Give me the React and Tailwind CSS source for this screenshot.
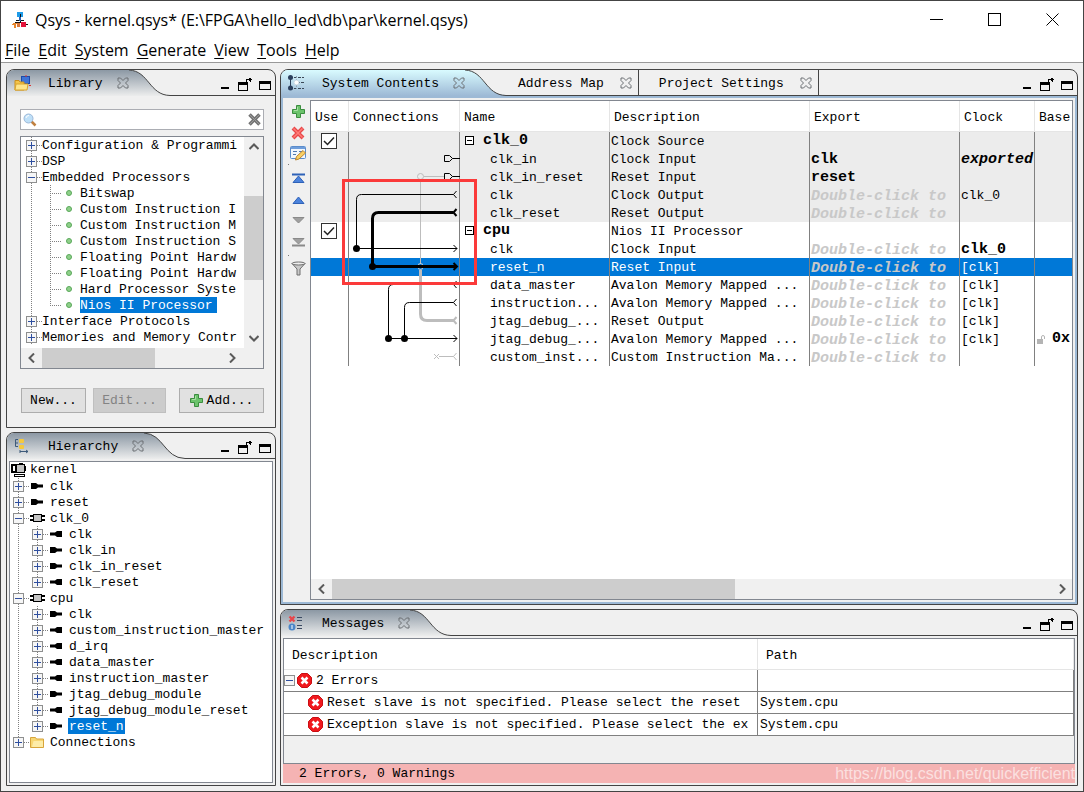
import { useState } from "react";

const MENUS = ["File", "Edit", "System", "Generate", "View", "Tools", "Help"];

const LIBRARY = [
  { label: "Configuration & Programmi", kind: "plus" },
  { label: "DSP", kind: "plus" },
  { label: "Embedded Processors", kind: "minus" },
  { label: "Bitswap", kind: "leaf" },
  { label: "Custom Instruction I", kind: "leaf" },
  { label: "Custom Instruction M", kind: "leaf" },
  { label: "Custom Instruction S", kind: "leaf" },
  { label: "Floating Point Hardw", kind: "leaf" },
  { label: "Floating Point Hardw", kind: "leaf" },
  { label: "Hard Processor Syste", kind: "leaf" },
  { label: "Nios II Processor", kind: "leaf", last: true },
  { label: "Interface Protocols", kind: "plus" },
  { label: "Memories and Memory Contr", kind: "plus" },
];

const HIERARCHY = [
  { label: "clk", level: 1, icon: "in" },
  { label: "reset", level: 1, icon: "in" },
  { label: "clk_0", level: 1, icon: "chip", open: true },
  { label: "clk", level: 2, icon: "out" },
  { label: "clk_in", level: 2, icon: "in" },
  { label: "clk_in_reset", level: 2, icon: "in" },
  { label: "clk_reset", level: 2, icon: "out", last: true },
  { label: "cpu", level: 1, icon: "chip", open: true },
  { label: "clk", level: 2, icon: "in" },
  { label: "custom_instruction_master", level: 2, icon: "out" },
  { label: "d_irq", level: 2, icon: "out" },
  { label: "data_master", level: 2, icon: "out" },
  { label: "instruction_master", level: 2, icon: "out" },
  { label: "jtag_debug_module", level: 2, icon: "in" },
  { label: "jtag_debug_module_reset", level: 2, icon: "out" },
  { label: "reset_n", level: 2, icon: "in", last: true },
  { label: "Connections", level: 1, icon: "folder", last: true },
];

const HINT = "Double-click to";

const ROWS = [
  { name: "clk_0", module: true, desc: "Clock Source", shade: true },
  { name: "clk_in", desc: "Clock Input", exported: "clk", clock: "exported", clockStyle: "font-bold italic text-[15px]", shade: true },
  { name: "clk_in_reset", desc: "Reset Input", exported: "reset", shade: true },
  { name: "clk", desc: "Clock Output", hint: true, clock: "clk_0", shade: true },
  { name: "clk_reset", desc: "Reset Output", hint: true, shade: true },
  { name: "cpu", module: true, desc: "Nios II Processor" },
  { name: "clk", desc: "Clock Input", hint: true, clock: "clk_0", clockStyle: "font-bold text-[15px]" },
  { name: "reset_n", desc: "Reset Input", hint: true, clock: "[clk]", selected: true },
  { name: "data_master", desc: "Avalon Memory Mapped ...", hint: true, clock: "[clk]" },
  { name: "instruction...", desc: "Avalon Memory Mapped ...", hint: true, clock: "[clk]" },
  { name: "jtag_debug_...", desc: "Reset Output", hint: true, clock: "[clk]" },
  { name: "jtag_debug_...", desc: "Avalon Memory Mapped ...", hint: true, clock: "[clk]", base: "0x" },
  { name: "custom_inst...", desc: "Custom Instruction Ma...", hint: true },
];

const ERRORS = [
  "Reset slave is not specified. Please select the reset",
  "Exception slave is not specified. Please select the ex",
];

/* ---------- icons ---------- */

function QsysIcon() {
  return (
    <svg width="16" height="16" viewBox="0 0 16 16" shapeRendering="crispEdges">
      <rect x="5" y="0" width="6" height="5" fill="#1e9be8" />
      <path d="M8 2v8M3 10h10M4 8h8" stroke="#111" fill="none" />
      <path d="M7 5h2v4h-2z" fill="#2b63b8" />
      <path d="M0 12h1v-1h1v4h1v-4h2v4" stroke="#e8862c" fill="none" />
      <rect x="5" y="11" width="3" height="4" fill="#d9763a" />
      <rect x="9" y="10" width="5" height="5" fill="#e3123a" />
      <path d="M14 12.500h2" stroke="#111" />
    </svg>
  );
}

function LibraryIcon() {
  return (
    <svg width="17" height="16" viewBox="0 0 17 16">
      <rect x="7.500" y="1.500" width="8" height="7" fill="#3f74d6" stroke="#1d4ba8" />
      <path d="M15 10.500h2M12 0v2" stroke="#d33" />
      <path d="M1 15V5.500h4l1 1.500h4v8z" fill="#f3c44a" stroke="#c98f1d" />
      <path d="M1 15l1-6h12l-1 6z" fill="#fde58c" stroke="#d9a42d" />
    </svg>
  );
}

function HierarchyIcon() {
  return (
    <svg width="16" height="16" viewBox="0 0 16 16">
      <path d="M4 1.500H1.500v7H4M2 5h2" stroke="#3d5a7a" fill="none" />
      <rect x="5" y="1" width="5" height="4" rx="1" fill="#f5c93e" />
      <rect x="5" y="7" width="5" height="4" rx="1" fill="#f5c93e" />
      <path d="M6 13.500h8M6 12v3M12 12l2 1.500-2 1.500" stroke="#3d5a7a" fill="none" />
    </svg>
  );
}

function ContentsIcon() {
  return (
    <svg width="17" height="16" viewBox="0 0 17 16">
      <path d="M2 2.500h14M2 13.500h14M9 7.500h7" stroke="#3a4756" fill="none" strokeDasharray="3 1" />
      <path d="M8.500 1v13" stroke="#8fa3b5" strokeDasharray="2 1" />
      <path d="M2.500 2v11" stroke="#2a3b55" />
      <circle cx="2.500" cy="2.500" r="2.500" fill="#2b3f5c" />
      <circle cx="2.500" cy="13" r="2.500" fill="#2b3f5c" />
      <circle cx="8.500" cy="7.500" r="2.500" fill="#fff" stroke="#c9d8e4" />
    </svg>
  );
}

function MessagesIcon() {
  return (
    <svg width="16" height="16" viewBox="0 0 16 16">
      <path d="M1.500 1.500l5 5M6.500 1.500l-5 5" stroke="#e8474c" strokeWidth="2.400" />
      <circle cx="4" cy="12" r="3.500" fill="#4b86c8" />
      <path d="M4 10v4" stroke="#fff" />
      <path d="M9 2.500h5M9 5.500h5M9 10.500h5M9 13.500h5" stroke="#3a4a63" />
    </svg>
  );
}

function CloseGlyph() {
  return (
    <svg width="12" height="12" viewBox="0 0 12 12" fill="none" stroke="#6b6f73">
      <path d="M1 1h2.500L6 3.500 8.500 1H11v2.500L8.500 6 11 8.500V11H8.500L6 8.500 3.500 11H1V8.500L3.500 6 1 3.500z" />
    </svg>
  );
}

function SearchIcon() {
  return (
    <svg width="14" height="14" viewBox="0 0 14 14">
      <path d="M8.500 8.500L12.500 12.500" stroke="#c08040" strokeWidth="2.500" />
      <circle cx="5.500" cy="5.500" r="4.500" fill="#bfe0f8" stroke="#9cb8d8" />
      <path d="M3 5a3 3 0 0 1 3-2.500" stroke="#fff" fill="none" />
    </svg>
  );
}

function ClearIcon() {
  return (
    <svg width="13" height="13" viewBox="0 0 13 13">
      <path d="M1.500 1.500l10 10M11.500 1.500l-10 10" stroke="#747474" strokeWidth="3.500" />
      <path d="M2 2l9 9M11 2l-9 9" stroke="#9a9a9a" strokeWidth="1" />
    </svg>
  );
}

function PlusIcon() {
  return (
    <svg width="13" height="13" viewBox="0 0 13 13">
      <path d="M4.500 .5h4v4h4v4h-4v4h-4v-4h-4v-4h4z" fill="#6cc36c" stroke="#3b8d3f" />
      <path d="M5.500 2v3.500H2" stroke="#a9e0a4" fill="none" />
    </svg>
  );
}

function RemoveIcon() {
  return (
    <svg width="14" height="14" viewBox="0 0 14 14">
      <path d="M2 2l10 10M12 2L2 12" stroke="#e8484a" strokeWidth="4" />
      <path d="M2.500 2.500l9 9M11.500 2.500l-9 9" stroke="#ff7c78" strokeWidth="1.500" />
    </svg>
  );
}

function EditIcon() {
  return (
    <svg width="17" height="15" viewBox="0 0 17 15">
      <rect x=".5" y=".5" width="15" height="12" rx="1" fill="#f2f7fd" stroke="#5b8ccb" />
      <path d="M1 2h14" stroke="#6f9edb" strokeWidth="2" />
      <path d="M3 5.500h4M3 8.500h3M9 5.500h4" stroke="#5078b0" />
      <path d="M5.500 14l1-3.500 6.500-6 2.500 2.500-6.500 6z" fill="#f9cf63" stroke="#b98332" />
    </svg>
  );
}

function ArrowIcon({ up, bar, gray }) {
  const fill = gray ? "#a0a0a0" : "#4b83dc";
  const edge = gray ? "#8a8a8a" : "#2f62b8";
  return (
    <svg width="13" height="11" viewBox="0 0 13 11">
      {up ? (
        <path d="M1 9.500L6.500 3l5.500 6.500z" fill={fill} stroke={edge} />
      ) : (
        <path d="M1 2.500h11L6.500 8z" fill={fill} stroke={edge} />
      )}
      {bar && <path d={up ? "M0 1.500h13" : "M0 9.500h13"} stroke={edge} strokeWidth="2" />}
    </svg>
  );
}

function FilterIcon() {
  return (
    <svg width="15" height="15" viewBox="0 0 15 15">
      <path d="M1 2.500l5 5.500v6h3V8l5-5.500z" fill="#c9c9c9" stroke="#6e6e6e" />
      <ellipse cx="7.500" cy="2.500" rx="6.500" ry="1.500" fill="#eee" stroke="#6e6e6e" />
    </svg>
  );
}

function ErrorIcon() {
  return (
    <svg width="15" height="15" viewBox="0 0 15 15">
      <path d="M4.500 .5h6l4 4v6l-4 4h-6l-4-4v-6z" fill="#f0191d" stroke="#c90f14" />
      <path d="M4.500 4.500l6 6M10.500 4.500l-6 6" stroke="#fff" strokeWidth="2.500" />
    </svg>
  );
}

function LockIcon() {
  return (
    <svg width="9" height="9" viewBox="0 0 9 9">
      <rect x="0" y="4" width="6" height="5" fill="#b4b4b4" />
      <path d="M4.500 4V2a1.500 1.500 0 0 1 3 0v2" stroke="#b4b4b4" fill="none" />
    </svg>
  );
}

function NodeIcon({ type }) {
  if (type === "chip") {
    return (
      <svg width="15" height="10" viewBox="0 0 15 10" shapeRendering="crispEdges">
        <path d="M0 3h15M0 7h15" stroke="#000" strokeWidth="2" />
        <rect x="3.500" y="1.500" width="8" height="7" fill="#c4c4c4" stroke="#000" />
      </svg>
    );
  }
  if (type === "folder") {
    return (
      <svg width="14" height="12" viewBox="0 0 14 12">
        <path d="M.5 11.500V1.500h5l1 1.500h7v8.500z" fill="#f7d774" stroke="#d8a53a" />
        <path d="M2 11l1.500-6H13v6z" fill="#fdeca8" />
      </svg>
    );
  }
  const d = type === "in" ? "M1 1h5l2 1.500h5v3H8L6 7H1z" : "M13 1H8L6 2.500H1v3h5L8 7h5z";
  return (
    <svg width="14" height="8" viewBox="0 0 14 8">
      <path d={d} fill="#000" />
    </svg>
  );
}

function KernelIcon() {
  return (
    <svg width="15" height="14" viewBox="0 0 15 14" shapeRendering="crispEdges">
      <rect x="1" y="2" width="4" height="7" fill="#fff" stroke="#000" strokeWidth="2" />
      <rect x="5.500" y="1.500" width="8" height="8" fill="#c4c4c4" stroke="#000" />
      <path d="M8 .5h4M14 3v5" stroke="#000" />
      <rect x="3" y="11" width="10" height="2" fill="#fff" stroke="#000" />
    </svg>
  );
}

function Chevron({ d }) {
  return (
    <svg width="10" height="10" viewBox="0 0 10 10" fill="none" stroke="#5a5a5a" strokeWidth="2">
      <path d={d} />
    </svg>
  );
}

const CHEVRONS = {
  left: "M7 0.500L2.500 5 7 9.500",
  right: "M3 0.500L7.500 5 3 9.500",
  up: "M0.500 7L5 2.500 9.500 7",
  down: "M0.500 3L5 7.500 9.500 3",
};

// one 19x16 cell of dotted guide lines, with an optional +/- box
function Guide({ box, down = true, up = true, across = true }) {
  return (
    <svg className="shrink-0" width="19" height="16" viewBox="0 0 19 16" fill="none">
      <g stroke="#808080" strokeDasharray="1 1">
        {up && <path d="M8.500 0v8" />}
        {down && <path d="M8.500 8v8" />}
        {across && <path d="M8 8.500h11" />}
      </g>
      {box && (
        <g>
          <rect x="3.500" y="3.500" width="10" height="10" fill="#f6f6f6" stroke="#8e8f8f" />
          <path d={box === "plus" ? "M5 8.500h7M8.500 5v7" : "M5 8.500h7"} stroke="#2f4f9f" />
        </g>
      )}
    </svg>
  );
}

/* ---------- panels ---------- */

function PanelButtons() {
  return (
    <div className="flex items-end gap-1.5 pb-1 pr-[3px]">
      <button aria-label="Minimize">
        <svg width="14" height="14" viewBox="0 0 14 14" shapeRendering="crispEdges">
          <path d="M3 11h8" stroke="#000" strokeWidth="2" />
        </svg>
      </button>
      <button aria-label="Detach">
        <svg width="14" height="14" viewBox="0 0 14 14" shapeRendering="crispEdges">
          <path d="M.5 5v8.500h9V5" stroke="#000" fill="none" />
          <path d="M0 6.500h10" stroke="#000" strokeWidth="3" />
          <path d="M8.500 5V2.500H14M12 .5v4M11.500 1v3" stroke="#000" fill="none" />
        </svg>
      </button>
      <button aria-label="Maximize">
        <svg width="14" height="14" viewBox="0 0 14 14" shapeRendering="crispEdges">
          <rect x="1.500" y="4.500" width="11" height="8" stroke="#000" fill="none" />
          <path d="M1 5.500h12" stroke="#000" strokeWidth="3" />
        </svg>
      </button>
    </div>
  );
}

function TabCurve({ active }) {
  const id = active ? "curve-active" : "curve-idle";
  return (
    <svg className="shrink-0" width="41" height="26" viewBox="0 0 41 26">
      <defs>
        <linearGradient id={id} x1="0" y1="0" x2="0" y2="1">
          <stop offset="0" stopColor={active ? "#d9fbff" : "#8c98a4"} />
          <stop offset="1" stopColor={active ? "#9db9d5" : "#eceded"} />
        </linearGradient>
      </defs>
      <path d="M0 0C20 1 20 25 41 25V26H0z" fill={`url(#${id})`} />
      <path d="M0 0C20 1 20 25 41 25.500" fill="none" stroke="#444" />
    </svg>
  );
}

function Panel({ title, icon, active, tabs, className, children }) {
  return (
    <section className={`flex flex-col overflow-hidden rounded-t-lg border border-[#444] bg-[#f0f0f0] ${className || ""}`}>
      <header className="flex h-[26px] shrink-0">
        <div
          className={`flex items-center pl-[7px] ${
            active ? "bg-linear-to-b from-[#d9fbff] to-[#9db9d5]" : "bg-linear-to-b from-[#8c98a4] to-[#eceded]"
          }`}
        >
          <span className="flex w-[34px]">{icon}</span>
          <h2 className="pt-0.5 whitespace-pre">{title}</h2>
          <button className="ml-[14px]" aria-label={`Close ${title}`}>
            <CloseGlyph />
          </button>
        </div>
        <TabCurve active={active} />
        <div className="flex flex-1 border-b border-[#444]">
          {tabs}
          <div className="ml-auto flex">
            <PanelButtons />
          </div>
        </div>
      </header>
      {children}
    </section>
  );
}

function IdleTab({ title, className }) {
  return (
    <div className={`flex items-center border-r border-[#444] ${className}`}>
      <button className="pt-0.5 whitespace-pre">{title}</button>
      <button className="ml-4" aria-label={`Close ${title}`}>
        <CloseGlyph />
      </button>
    </div>
  );
}

function HScroll({ thumb, className }) {
  return (
    <div className={`flex h-5 shrink-0 items-stretch bg-[#f0f0f0] ${className || ""}`}>
      <button className="flex w-[21px] items-center justify-center" aria-label="Scroll left">
        <Chevron d={CHEVRONS.left} />
      </button>
      <div className="flex-1">
        <div className={`h-full bg-[#cdcdcd] ${thumb}`} />
      </div>
      <button className="flex w-[21px] items-center justify-center" aria-label="Scroll right">
        <Chevron d={CHEVRONS.right} />
      </button>
    </div>
  );
}

function LibraryPanel() {
  const [query, setQuery] = useState("");
  const [selected, setSelected] = useState(10);

  return (
    <Panel title="Library" icon={<LibraryIcon />}>
      <div className="flex flex-col pt-[13px] pr-[11px] pb-[14px] pl-[13px]">
        <div className="mb-1.5 flex h-[21px] items-center border border-[#abadb3] bg-white px-0.5">
          <SearchIcon />
          <input
            type="text"
            aria-label="Search library"
            value={query}
            onChange={(e) => setQuery(e.target.value)}
            className="min-w-0 flex-1 px-1 outline-none"
          />
          <button aria-label="Clear search" onClick={() => setQuery("")}>
            <ClearIcon />
          </button>
        </div>
        <div className="border border-[#828790] bg-white">
          <div className="flex">
            <ul className="min-w-0 flex-1 overflow-hidden pb-[3px] pl-0.5">
              {LIBRARY.map((item, i) => (
                <li key={i} className="flex h-4 leading-[18px] whitespace-pre" onClick={() => setSelected(i)}>
                  {item.kind === "leaf" ? (
                    <>
                      <Guide across={false} />
                      <Guide down={!item.last} />
                      <span className="flex w-[19px] shrink-0 items-center justify-center pr-1">
                        <span className="size-1.5 rounded-full border border-[#5aa85a] bg-[#8fd08a]" />
                      </span>
                    </>
                  ) : (
                    <Guide box={item.kind} />
                  )}
                  <span className={i === selected ? "bg-[#0078d7] pr-1 text-white" : ""}>{item.label}</span>
                </li>
              ))}
            </ul>
            <div className="flex w-[19px] flex-col bg-[#f0f0f0]">
              <button className="flex h-5 items-center justify-center" aria-label="Scroll up">
                <Chevron d={CHEVRONS.up} />
              </button>
              <div className="flex flex-1 flex-col">
                <div className="basis-[23%]" />
                <div className="basis-[49%] bg-[#cdcdcd]" />
              </div>
              <button className="flex h-5 items-center justify-center" aria-label="Scroll down">
                <Chevron d={CHEVRONS.down} />
              </button>
            </div>
          </div>
          <HScroll thumb="w-[63%]" className="pr-[21px]" />
        </div>
        <div className="mt-[19px] flex h-[25px] pl-px">
          <button className="w-[65px] border border-[#adadad] bg-[#e1e1e1]">New...</button>
          <button className="ml-[7px] w-[73px] border border-[#bfbfbf] bg-[#cccccc] text-[#838383]" disabled>
            Edit...
          </button>
          <button className="ml-auto flex w-[85px] items-center justify-center gap-1 border border-[#adadad] bg-[#e1e1e1]">
            <PlusIcon />
            Add...
          </button>
        </div>
      </div>
    </Panel>
  );
}

function HierarchyPanel() {
  const [selected, setSelected] = useState(15);

  return (
    <Panel title="Hierarchy" icon={<HierarchyIcon />} className="min-h-0 flex-1">
      <div className="flex min-h-0 flex-1 p-0.5">
        <ul className="flex-1 overflow-hidden border border-[#828790] bg-white">
          <li className="flex h-4 items-center gap-1 pl-px leading-[18px]">
            <KernelIcon />
            kernel
          </li>
          {HIERARCHY.map((node, i) => (
            <li key={i} className="flex h-4 leading-[18px] whitespace-pre" onClick={() => setSelected(i)}>
              {node.level === 2 && <Guide across={false} />}
              <Guide box={node.open ? "minus" : "plus"} down={!node.last} />
              <span className="flex w-5 shrink-0 items-center pl-px">
                <NodeIcon type={node.icon} />
              </span>
              <span className={i === selected ? "bg-[#0078d7] px-px text-white" : "px-px"}>{node.label}</span>
            </li>
          ))}
        </ul>
      </div>
    </Panel>
  );
}

// wires between the module ports, drawn over the Connections column
function Wires() {
  const fork = (y) => `M107.500 ${y - 3.5}L104.500 ${y}l3 3.500`;
  const arrow = (y) => `M104.500 ${y - 3.5}L108 ${y}l-3.500 3.500`;
  return (
    <svg
      className="pointer-events-none absolute -top-0.5 -left-[9px] max-w-none"
      width="140"
      height="240"
      viewBox="-9 -2 140 240"
      fill="none"
    >
      <g stroke="#bdbdbd">
        <path d="M71.500 48v84M75 44.500h20" />
        <circle cx="71.500" cy="44.500" r="3" fill="#ececec" />
        <path d="M71.500 138v44q0 6.500 6.500 6.500h27" strokeWidth="3" />
        <path d={fork(188.5)} strokeWidth="2" />
        <path d={`M85 222l5 5M90 222l-5 5M90 224.500h14.500${fork(224.5)}`} />
      </g>
      <g stroke="#000">
        <path d="M95.500 23.500h5l3 3-3 3h-5zM103.500 26.500h7.500" />
        <path d="M95.500 41.500h5l3 3-3 3h-5zM103.500 44.500h7.500" />
        <path d={`M104.500 62.500H12.500q-5 0-5 5v49H108${fork(62.5)}${arrow(116.5)}`} />
        <path d="M104.500 80.500H29.500q-6 0-6 6v48H107" strokeWidth="3" />
        <path d={`${fork(80.5)}${arrow(134.5)}`} strokeWidth="2" />
        <path d={`M104.500 152.500H44.500q-5 0-5 5v49H108${fork(152.5)}${arrow(206.5)}`} />
        <path d={`M104.500 170.500H60.500q-5 0-5 5v31${fork(170.5)}`} />
      </g>
      <g fill="#000">
        <circle cx="7.500" cy="116.500" r="3.500" />
        <circle cx="23.500" cy="134.500" r="3.500" />
        <circle cx="39.500" cy="206.500" r="3.500" />
        <circle cx="55.500" cy="206.500" r="3.500" />
      </g>
      <path d="M69 132.500q2.500-2 5 0M69 136.500q2.500 2 5 0" stroke="#d0d0d0" />
      <rect x="-5.500" y="48.500" width="132" height="103" stroke="#fb3a3a" strokeWidth="3" />
    </svg>
  );
}

function UseBox({ name }) {
  const [on, setOn] = useState(true);
  return (
    <label className="ml-[10px] grid w-4 pt-px">
      <input
        type="checkbox"
        aria-label={`Use ${name}`}
        checked={on}
        onChange={() => setOn(!on)}
        className="col-start-1 row-start-1 size-4 appearance-none border border-[#333] bg-white"
      />
      {on && (
        <svg className="pointer-events-none col-start-1 row-start-1" width="16" height="16" viewBox="0 0 16 16">
          <path d="M3 8l3.500 3.500L13 4.500" fill="none" stroke="#222" strokeWidth="1.500" />
        </svg>
      )}
    </label>
  );
}

function Cell({ className, children }) {
  return (
    <td className="overflow-hidden border-r border-[#808080] p-0 whitespace-pre last:border-r-0">
      <div className={`h-[18px] leading-5 ${className || ""}`}>{children}</div>
    </td>
  );
}

function ContentsTable() {
  const [selected, setSelected] = useState(7);
  const th = "h-[31px] border-r border-b border-[#e5e5e5] p-0 pt-[3px] pl-1 text-left font-normal last:border-r-0";

  return (
    <table className="w-full table-fixed border-separate border-spacing-0">
      <colgroup>
        <col className="w-[38px]" />
        <col className="w-[111px]" />
        <col className="w-[150px]" />
        <col className="w-[200px]" />
        <col className="w-[150px]" />
        <col className="w-[75px]" />
        <col />
      </colgroup>
      <thead>
        <tr>
          {["Use", "Connections", "Name", "Description", "Export", "Clock", "Base"].map((h) => (
            <th key={h} className={th}>{h}</th>
          ))}
        </tr>
      </thead>
      <tbody>
        {ROWS.map((row, i) => (
          <tr
            key={i}
            onClick={() => setSelected(i)}
            className={i === selected ? "bg-[#0078d7] text-white" : row.shade ? "bg-[#ececec]" : "bg-white"}
          >
            <Cell>{row.module && <UseBox name={row.name} />}</Cell>
            {i === 0 ? (
              <td className="relative border-r border-[#808080] p-0">
                <Wires />
              </td>
            ) : (
              <Cell />
            )}
            {row.module ? (
              <Cell className="flex items-center gap-2 pl-[5px] text-[15px] font-bold">
                <svg width="10" height="10" viewBox="0 0 10 10">
                  <rect x=".5" y=".5" width="8" height="8" fill="#fff" stroke="#000" />
                  <path d="M2 4.500h5" stroke="#000" />
                </svg>
                {row.name}
              </Cell>
            ) : (
              <Cell className="pl-[30px]">{row.name}</Cell>
            )}
            <Cell className="pl-px">{row.desc}</Cell>
            <Cell className="pl-px text-[15px] font-bold">
              {row.exported}
              {row.hint && <i className="block leading-[22px] text-[#c8c8c8]">{HINT}</i>}
            </Cell>
            <Cell className={`pl-px ${row.clockStyle || ""}`}>{row.clock}</Cell>
            <Cell className="flex items-center gap-1.5 pl-0.5 text-[15px] font-bold">
              {row.base && (
                <>
                  <span className="shrink-0">
                    <LockIcon />
                  </span>
                  {row.base}
                </>
              )}
            </Cell>
          </tr>
        ))}
      </tbody>
    </table>
  );
}

function ContentsPanel() {
  const tool = "flex h-[21px] w-full items-center justify-center";
  return (
    <Panel
      title="System Contents"
      icon={<ContentsIcon />}
      active
      className="min-h-0 flex-1"
      tabs={
        <>
          <IdleTab title="Address Map" className="pr-1.5 pl-3" />
          <IdleTab title="Project Settings" className="pr-1.5 pl-5" />
        </>
      }
    >
      <div className="flex min-h-0 flex-1 border-2 border-[#9db9d5]">
        <div className="flex w-[27px] shrink-0 flex-col pt-[3px] pl-[3px]">
          <button className={tool} aria-label="Add"><PlusIcon /></button>
          <button className={tool} aria-label="Remove"><RemoveIcon /></button>
          <button className={tool} aria-label="Edit"><EditIcon /></button>
          <div className="flex h-1 items-start pl-0.5"><span className="size-px bg-[#777]" /></div>
          <button className={tool} aria-label="Move to top"><ArrowIcon up bar /></button>
          <button className={tool} aria-label="Move up"><ArrowIcon up /></button>
          <button className={tool} aria-label="Move down"><ArrowIcon gray /></button>
          <button className={tool} aria-label="Move to bottom"><ArrowIcon bar gray /></button>
          <div className="flex h-1.5 items-center pl-0.5"><span className="size-px bg-[#777]" /></div>
          <button className={tool} aria-label="Filter"><FilterIcon /></button>
        </div>
        <div className="my-0.5 mr-0.5 flex min-w-0 flex-1 flex-col border border-[#828790] bg-white">
          <div className="min-h-0 flex-1 overflow-hidden">
            <ContentsTable />
          </div>
          <HScroll thumb="w-[56%]" />
        </div>
      </div>
    </Panel>
  );
}

function MessagesPanel() {
  const th = "h-[31px] border-r border-b border-[#e5e5e5] p-0 pt-[3px] pl-2 text-left font-normal";
  const td = "h-[22px] overflow-hidden border-r border-b border-[#808080] p-0 whitespace-pre";
  return (
    <Panel title="Messages" icon={<MessagesIcon />}>
      <div className="p-0.5">
        <div className="border border-[#828790] pb-[27px]">
          <table className="w-full table-fixed border-separate border-spacing-0 bg-white">
            <thead>
              <tr>
                <th className={`${th} w-[60%]`}>Description</th>
                <th className={th}>Path</th>
              </tr>
            </thead>
            <tbody>
              <tr>
                <td className={td}>
                  <div className="flex items-center">
                    <svg width="11" height="11" viewBox="0 0 11 11">
                      <rect x=".5" y=".5" width="10" height="10" fill="#f6f6f6" stroke="#8e8f8f" />
                      <path d="M2 5.500h7" stroke="#2f4f9f" />
                    </svg>
                    <span className="mr-1 ml-0.5"><ErrorIcon /></span>
                    2 Errors
                  </div>
                </td>
                <td className={td} />
              </tr>
              {ERRORS.map((text) => (
                <tr key={text}>
                  <td className={td}>
                    <div className="flex items-center gap-1 pl-6">
                      <span className="shrink-0"><ErrorIcon /></span>
                      <span className="pt-px">{text}</span>
                    </div>
                  </td>
                  <td className={`${td} pl-0.5`}>System.cpu</td>
                </tr>
              ))}
            </tbody>
          </table>
        </div>
        <div className="flex h-[19px] items-center bg-[#f5b3b3] pl-4">
          <span className="whitespace-pre">2 Errors, 0 Warnings</span>
          <span className="ml-auto font-['Liberation_Sans',sans-serif] text-base text-white/60">
            https://blog.csdn.net/quickefficient
          </span>
        </div>
      </div>
    </Panel>
  );
}

function App() {
  return (
    <div className="flex h-screen flex-col overflow-hidden border border-[#444] bg-[#f0f0f0] font-['Liberation_Mono',monospace] text-[13px] text-black">
      <div className="border-b border-[#999] bg-white font-['Open_Sans',sans-serif] text-base">
        <div className="flex h-[37px] items-center pr-0.5 pl-[11px]">
          <QsysIcon />
          <h1 className="ml-[7px]">Qsys - kernel.qsys* (E:\FPGA\hello_led\db\par\kernel.qsys)</h1>
          <div className="ml-auto flex">
            <button className="flex w-[58px] justify-center" aria-label="Minimize window">
              <svg width="13" height="13" viewBox="0 0 13 13"><path d="M0 6.500h13" stroke="#000" /></svg>
            </button>
            <button className="flex w-[58px] justify-center" aria-label="Maximize window">
              <svg width="13" height="13" viewBox="0 0 13 13"><rect x=".5" y=".5" width="12" height="12" fill="none" stroke="#000" /></svg>
            </button>
            <button className="flex w-[58px] justify-center" aria-label="Close window">
              <svg width="13" height="13" viewBox="0 0 13 13"><path d="M.5 .5l12 12M12.500 .5l-12 12" stroke="#000" /></svg>
            </button>
          </div>
        </div>
        <nav className="flex h-6 items-center gap-2 pl-1">
          {MENUS.map((m) => (
            <button key={m}>
              <span className="underline underline-offset-2">{m[0]}</span>
              {m.slice(1)}
            </button>
          ))}
        </nav>
      </div>
      <main className="flex min-h-0 flex-1 gap-1 px-[5px] pt-1.5 pb-[5px]">
        <div className="flex w-[270px] shrink-0 flex-col gap-1">
          <LibraryPanel />
          <HierarchyPanel />
        </div>
        <div className="flex min-w-0 flex-1 flex-col gap-1">
          <ContentsPanel />
          <MessagesPanel />
        </div>
      </main>
    </div>
  );
}

export default App;
